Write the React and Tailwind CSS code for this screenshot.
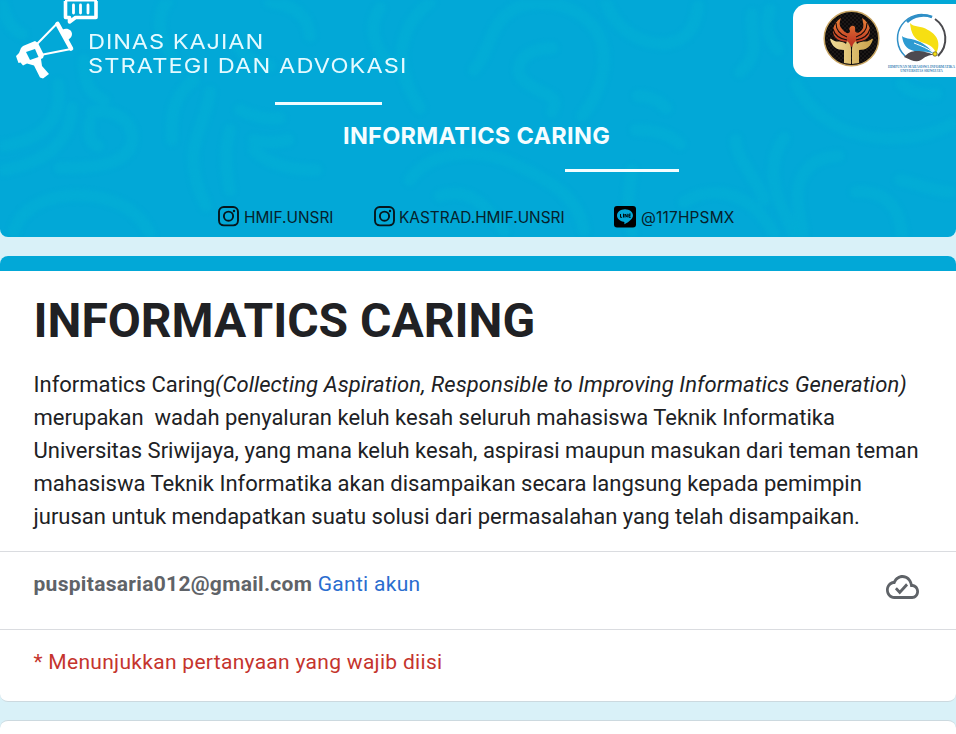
import React from "react";

function Swirls() {
  return (
    <svg className="absolute inset-0 h-full w-full blur-[2px]" viewBox="0 0 956 237" fill="none" stroke="#03b1d5" strokeOpacity="0.45" strokeLinecap="round" aria-hidden="true">
      <g strokeWidth="12">
        <path d="M2 4C6 22 14 30 22 34M58 84C64 120 40 140 4 146" />
        <path d="M72 108C70 140 48 162 4 170" />
        <path d="M92 112c34-4 46 20 38 36s-34 20-70 20" />
        <path d="M90 122c-2 14 0 22 8 24" />
        <path d="M14 232c6-26 40-40 76-36 30 4 50 16 60 38" />
        <path d="M84 60c0 24 6 34 20 40M194 80c-18 14-24 30-22 60" />
        <path d="M210 92c-4 30-20 50-16 74 2 22 8 30 12 40" />
        <path d="M230 130c-6 22-4 40 0 60" />
        <path d="M240 110c12 6 24 10 40 8M254 140c14 4 24 2 34 0M254 150c14 14 34 20 62 20" />
        <path d="M270 2c26 4 38 14 40 34M236 44c8 12 20 20 34 22" />
        <path d="M168 0c-14 18-8 40 4 56" />
        <path d="M380 8c-14 20-4 44 14 60" />
        <path d="M430 2c-30 24-40 60-10 106" />
        <path d="M474 70c18-20 14-50 46-64 30-8 58 0 76 24 16 26 6 62-14 86" />
        <path d="M552 48c-30 0-44 22-24 36s32 10 24 28" />
        <path d="M606 2c8 24 30 42 60 42 24-4 30-20 32-38" />
        <path d="M410 180c20-30 70-34 108-14 40 18 60 34 66 64" />
        <path d="M440 196c24-8 44 4 64 34" />
        <path d="M632 170c-4 26-6 40 0 62" />
        <path d="M638 96c10 0 20 4 28 12M636 130c20 0 34 4 44 14" />
        <path d="M752 14c-2 24 10 40-12 58M770 10c-6 20 0 30 8 40" />
        <path d="M796 84c20 40 60 56 100 54 24 0 40-6 56-14" />
        <path d="M902 84c8 8 20 12 34 10" />
        <path d="M736 140c0 20 20 36 28 60M784 138c-16 22-12 50 0 74s8 24 10 26" />
        <path d="M838 156c-34 2-42 26-40 48s6 24 4 34" />
        <path d="M684 202c30-18 68-10 90 32M856 192c30-2 44 16 46 44M900 180c20 4 28 10 50 12" />
      </g>
    </svg>
  );
}

function Megaphone() {
  return (
    <svg className="block h-20 w-[100px] shrink-0" viewBox="0 0 100 80" fill="none" aria-hidden="true">
      <path d="M65.500 1v16.500h4V22l6-4.500H96V1" stroke="#fff" strokeWidth="3.600" strokeLinejoin="round" />
      <path d="M65 0h32" stroke="#fff" strokeWidth="3" />
      <path d="M73.500 5v8M80.500 5v8M88 5v8" stroke="#fff" strokeWidth="2.800" strokeLinecap="round" />
      <path d="M37 44 57.500 23 71 49 43 54.500" stroke="#fff" strokeWidth="2" strokeLinejoin="round" />
      <path d="M57.500 24 71 48.500" stroke="#fff" strokeWidth="4.600" strokeLinecap="round" />
      <path d="M62 30c5-3 10 0 10 4 0 3-2 4-4 6" fill="#fff" />
      <path fillRule="evenodd" d="m21 48 2-2 12-5 3 2 6 12-1 3-2 1 1 7 7 8-6 4.500-3-1-6-12-7-2-4 2-2.500-3-2 .5-1.500-4-1-3 3-3ZM26 52l4 8 8.500-3-3.500-8Z" fill="#fff" />
    </svg>
  );
}

function PhoenixLogo() {
  return (
    <svg className="block size-[57px] shrink-0" viewBox="0 0 57 57" aria-hidden="true">
      <defs>
        <linearGradient id="fire" x1="0" y1="0" x2="0" y2="1">
          <stop stopColor="#e98238" />
          <stop offset="1" stopColor="#b92c20" />
        </linearGradient>
        <linearGradient id="gold">
          <stop stopColor="#f0dc98" />
          <stop offset="1" stopColor="#c9a14a" />
        </linearGradient>
        <pattern id="mesh" width="4" height="4" patternUnits="userSpaceOnUse">
          <path d="m0 0 4 4M4 0 0 4" stroke="#2b2421" strokeWidth=".5" />
        </pattern>
      </defs>
      <circle cx="28.500" cy="28.500" r="27.300" fill="#0c0a0b" stroke="#c8a563" strokeWidth="1.500" />
      <circle cx="28.500" cy="28.500" r="26" fill="url(#mesh)" />
      <path d="M18 8C10 13 8 22 12 27c3 4 9 4.500 12 5l4.500 5 4.500-5c3-.5 9-1 12-5 4-5 2-14-6-19 2 7 2 10-1 13-3 3-6 2-6-1 1-3-1-5-3.500-4-2 1-3 3-1.500 5 0 3-4 3-7-1-4-4-4-7-2-12Z" fill="url(#fire)" />
      <path d="M13 13c0 8 5 12 11 14M10 19c2 7 7 10 14 11M44 13c0 8-5 12-11 14M47 19c-2 7-7 10-14 11" stroke="#160d0b" strokeWidth="1.100" fill="none" />
      <path d="M7 31c1-1 3 2 6 2.500 5 0 8 .5 10 2.500l1-3c3 2 4 5 4 8v15l-7-1V42c-7 0-12-3-14-11ZM50 31c-1-1-3 2-6 2.500-5 0-8 .5-10 2.500l-1-3c-3 2-4 5-4 8v15l7-1V42c7 0 12-3 14-11Z" fill="url(#gold)" transform="translate(0 -2)" />
    </svg>
  );
}

function StudentUnionLogo() {
  return (
    <svg className="block h-[52px] w-[52px]" viewBox="0 0 52 52" fill="none" aria-hidden="true">
      <path d="M9 43A24 24 0 0 1 36 4" stroke="#2f8fc7" strokeWidth="1.500" />
      <path d="M11 9A24 24 0 0 1 36 4" stroke="#2f8fc7" strokeWidth="2.800" />
      <path d="M39 6A24 24 0 0 1 42 43" stroke="#4b4a4e" strokeWidth="2" />
      <path d="M14 10c4 5 11 2 18 7 8 4 14 12 8 24-1-6-6-9-12-11C18 27 15 20 14 10Z" fill="#f6df12" />
      <path d="M6 23c3 3 8 2 13 4 7 2 14 7 19 14-7-4-14-1-20-3C10 36 7 31 6 23Z" fill="#2d9bd2" />
      <path d="M18 30c7 3 14 5 21 11" stroke="#fff" strokeWidth="1" />
      <path d="M8 44c4-4 7-6 13-6 6 0 10 1 17 4-6 0-9 2-13 5-5 3-10 0-17-3Z" fill="#4d4a50" />
      <circle cx="39" cy="41" r="2.200" fill="#f6df12" stroke="#665c28" strokeWidth=".8" />
    </svg>
  );
}

function InstagramIcon() {
  return (
    <svg className="block size-[22px] shrink-0" viewBox="0 0 22 22" fill="none" stroke="#06161c" aria-hidden="true">
      <rect x="1" y="1" width="19" height="18.400" rx="4.800" strokeWidth="1.900" />
      <circle cx="10.500" cy="10.200" r="4.600" strokeWidth="1.900" />
      <circle cx="16" cy="5" r="1.200" fill="#06161c" stroke="none" />
    </svg>
  );
}

function LineIcon() {
  return (
    <svg className="block size-[22px] shrink-0" viewBox="0 0 22 22" aria-hidden="true">
      <rect width="22" height="21.500" rx="3" fill="#000" />
      <path d="M11 3.200c-4.500 0-8 2.800-8 6.300 0 3.200 2.900 5.700 6.700 6.200 1.200.2.500 1.400.7 2.500 2-.8 8.600-4.600 8.600-8.700 0-3.500-3.500-6.300-8-6.300Z" fill="#03a8d7" />
      <path d="M6.500 8v3.300h1.600M9.500 7.700v3.800M11 11.500V8l2.200 3.200V7.800M16.700 8.100h-1.800v3.200h1.800M15 9.700h1.500" stroke="#000" strokeWidth=".95" fill="none" />
    </svg>
  );
}

function CloudDone() {
  return (
    <svg className="block h-6 w-[33px]" viewBox="0 4 24 16" preserveAspectRatio="none" fill="#5f6368" aria-hidden="true">
      <path d="M19.350 10.040C18.670 6.590 15.640 4 12 4 9.110 4 6.600 5.640 5.350 8.040 2.340 8.360 0 10.910 0 14c0 3.310 2.690 6 6 6h13c2.760 0 5-2.240 5-5 0-2.640-2.050-4.780-4.650-4.960zM19 18H6c-2.210 0-4-1.790-4-4 0-2.050 1.530-3.760 3.560-3.970l1.070-.11.5-.95C8.080 7.140 9.940 6 12 6c2.620 0 4.880 1.860 5.390 4.430l.3 1.500 1.530.11C20.780 12.140 22 13.450 22 15c0 1.650-1.350 3-3 3zm-9-3.820-2.090-2.090L6.500 13.500 10 17l6.010-6.010-1.410-1.410z" />
    </svg>
  );
}

function Banner() {
  return (
    <header className="relative h-[237px] shrink-0 overflow-hidden rounded-b-lg bg-[#02a8d7]">
      <Swirls />
      <div className="relative flex h-full flex-col">
        <div className="flex h-[102px] shrink-0 items-start justify-between">
          <div className="flex">
            <Megaphone />
            <div className="-ml-3 origin-left scale-x-115 pt-[30px] font-['Inter',sans-serif] text-[20.5px] leading-6 font-normal whitespace-nowrap text-[#e4faff]">
              <p className="tracking-[0.8px]">DINAS KAJIAN</p>
              <p className="tracking-[0.97px]">STRATEGI DAN ADVOKASI</p>
            </div>
          </div>
          <div className="mt-1 flex h-[73px] w-[163px] rounded-l-[14px] bg-white pt-[6px] pl-[30px]">
            <PhoenixLogo />
            <div className="ml-[7px] flex w-[69px] shrink-0 flex-col items-center pt-[3px] text-center font-['Liberation_Serif',serif] font-bold text-[#3b83b6]">
              <StudentUnionLogo />
              <p className="text-[3.4px] leading-[4px] whitespace-nowrap">HIMPUNAN MAHASISWA INFORMATIKA</p>
              <p className="text-[3.4px] leading-[5px] whitespace-nowrap">UNIVERSITAS SRIWIJAYA</p>
            </div>
          </div>
        </div>
        <div className="ml-[275px] h-[3px] w-[107px] shrink-0 bg-[#effcff]" />
        <h2 className="mt-4 ml-[343px] h-[30px] shrink-0 font-['Inter',sans-serif] text-[23.5px] leading-[30px] font-bold tracking-[0.3px] whitespace-nowrap text-[#f5fdff]">INFORMATICS CARING</h2>
        <div className="mt-[18px] ml-[565px] h-[3px] w-[114px] shrink-0 bg-[#f4fdff]" />
        <div className="mt-[34px] ml-[218px] flex h-[22px] shrink-0 items-start font-['Inter',sans-serif] text-[15.4px] leading-6 whitespace-nowrap text-[#06212b]">
          <div className="flex w-[156px] gap-1">
            <InstagramIcon />
            <span>HMIF.UNSRI</span>
          </div>
          <div className="flex w-[240px] gap-[3px]">
            <InstagramIcon />
            <span>KASTRAD.HMIF.UNSRI</span>
          </div>
          <div className="flex gap-[5px]">
            <LineIcon />
            <span className="tracking-[0.2px]">@117HPSMX</span>
          </div>
        </div>
      </div>
    </header>
  );
}

export default function App() {
  return (
    <div className="flex h-[734px] w-[956px] flex-col overflow-hidden bg-[#d9f1f8] font-['Roboto',sans-serif] text-[#202124]">
      <Banner />
      <main className="mt-[19px] h-[446px] shrink-0 overflow-hidden rounded-lg border-b border-[#ccd9df] bg-white">
        <div className="h-[15px] bg-[#02a8d7]" />
        <section className="h-[281px] border-b border-[#dadce0] px-[33.5px] pt-[18px]">
          <h1 className="text-[48px] leading-[64px] font-bold whitespace-nowrap">INFORMATICS CARING</h1>
          <p className="mt-[15px] text-[22px] leading-[33px] whitespace-nowrap">
            <span>Informatics Caring</span>
            <em className="tracking-[0.09px]">(Collecting Aspiration, Responsible to Improving Informatics Generation)</em>
            <br />
            merupakan&nbsp; wadah penyaluran keluh kesah seluruh mahasiswa Teknik Informatika
            <br />
            Universitas Sriwijaya, yang mana keluh kesah, aspirasi maupun masukan dari teman teman
            <br />
            mahasiswa Teknik Informatika akan disampaikan secara langsung kepada pemimpin
            <br />
            jurusan untuk mendapatkan suatu solusi dari permasalahan yang telah disampaikan.
          </p>
        </section>
        <section className="flex h-[78px] items-start justify-between border-b border-[#dadce0] pt-4 pr-[37.5px] pl-[33.5px] text-[21px] leading-8">
          <p className="tracking-[0.3px] whitespace-nowrap">
            <strong className="font-bold text-[#5f6368]">puspitasaria012@gmail.com</strong>{" "}
            <a className="text-[#2a6dcf]">Ganti akun</a>
          </p>
          <div className="pt-[7px]">
            <CloudDone />
          </div>
        </section>
        <p className="px-[33.5px] pt-4 text-[21px] leading-8 tracking-[0.3px] text-[#c5342d]">* Menunjukkan pertanyaan yang wajib diisi</p>
      </main>
      <section className="mt-[18px] h-10 shrink-0 rounded-t-lg border-t border-[#ccd9df] bg-white" />
    </div>
  );
}
